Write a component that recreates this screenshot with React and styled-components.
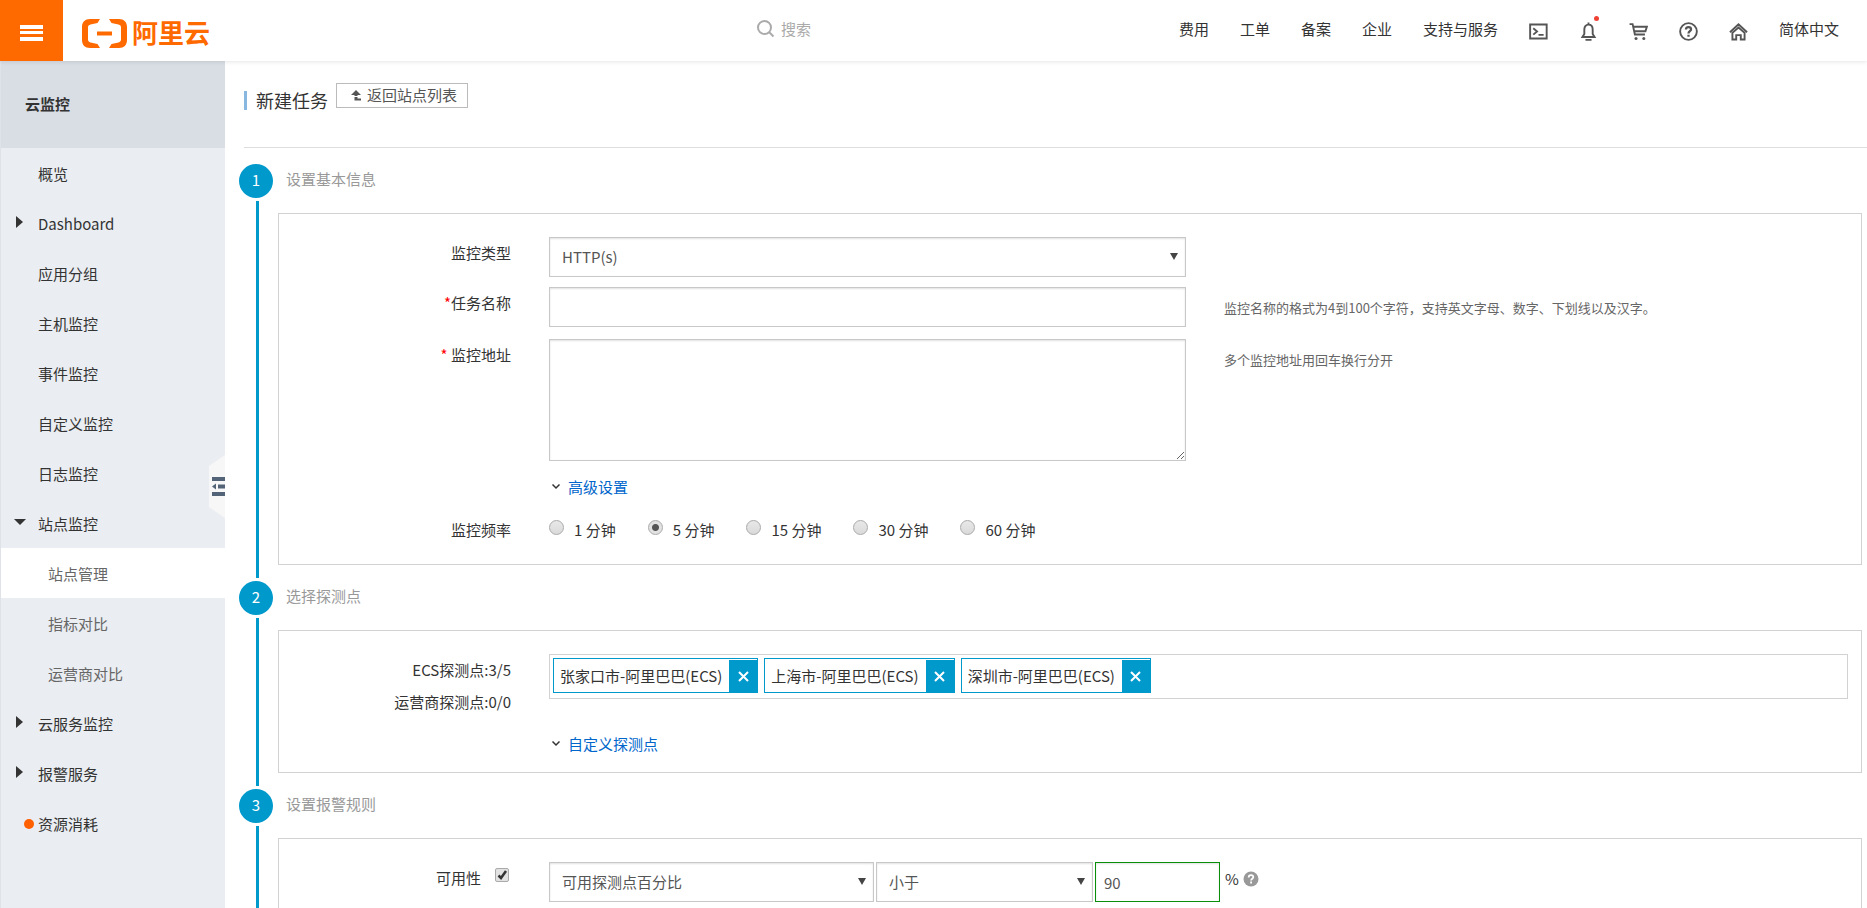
import React, { useState } from "react";
import styled, { createGlobalStyle, css } from "styled-components";

const NAV_LINKS = ["费用", "工单", "备案", "企业", "支持与服务"];

const MENU = [
  { name: "概览" },
  { name: "Dashboard", arrow: "right" },
  { name: "应用分组" },
  { name: "主机监控" },
  { name: "事件监控" },
  { name: "自定义监控" },
  { name: "日志监控" },
  { name: "站点监控", arrow: "down" },
  { name: "站点管理", sub: true, active: true },
  { name: "指标对比", sub: true },
  { name: "运营商对比", sub: true },
  { name: "云服务监控", arrow: "right" },
  { name: "报警服务", arrow: "right" },
  { name: "资源消耗", dot: true },
];

const FREQUENCIES = [1, 5, 15, 30, 60];

const TerminalIcon = () => (
  <NavSvg viewBox="0 0 20 20">
    <path d="M1.2 2.700h17.400v14.600H1.200zM4.500 6.500l4 3.400-4 3.400M10 13.600h5.400" />
  </NavSvg>
);

const BellIcon = () => (
  <NavSvg viewBox="0 0 20 20">
    <path d="M10 2.8c-3 0-4.4 2.200-4.400 5v4.700L3.600 15.800h12.800L14.400 12.500V7.800c0-2.800-1.400-5-4.400-5zM10 2.800V.6M6.800 18.800h6.400" />
  </NavSvg>
);

const CartIcon = () => (
  <NavSvg viewBox="0 0 20 20">
    <path d="M.6 2.200h3.200l2.400 11h10.600M4.500 5h14.300l-1.500 4.800H5.600" />
    <circle cx="7.400" cy="17.400" r="1.600" className="fill" />
    <circle cx="15.600" cy="17.400" r="1.600" className="fill" />
  </NavSvg>
);

const HelpIcon = () => (
  <NavSvg viewBox="0 0 20 20">
    <circle cx="10" cy="10" r="8.800" />
    <path d="M7.300 8c0-1.700 1.100-2.700 2.700-2.700s2.700 1 2.700 2.400c0 2-2.700 2-2.700 4.300M10 13.400v2" strokeWidth="2.400" />
  </NavSvg>
);

const HomeIcon = () => (
  <NavSvg viewBox="0 0 20 20">
    <path d="M1 10.800l9-8.400 9 8.400M3.600 11.400v7h4v-4.600h4.800v4.600h4v-7L10 5.800z" />
  </NavSvg>
);

const Chevron = () => (
  <ChevronSvg viewBox="0 0 14 14">
    <path d="M3.500 4.500l3.500 3.500 3.500-3.500" fill="none" stroke="#333" strokeWidth="1.500" />
  </ChevronSvg>
);

const Header = () => (
  <TopBar>
    <MenuButton aria-label="menu">
      <svg width="23" height="16" viewBox="0 0 23 16" fill="#fff">
        <path d="M0 0h23v4H0zM0 6h23v3H0zM0 12h23v4H0z" />
      </svg>
    </MenuButton>
    <Logo href="#">
      <svg width="45" height="29" viewBox="0 0 45 29" fill="#ff6a00">
        <path d="M18 0H8C3 0 0 3 0 8v13c0 5 3 8 8 8h10l-2.500-4-7-1.600C6.800 23 6 22 6 20.500v-12C6 7 6.800 6 8.500 5.600l7-1.600z" />
        <path d="M27 0h10c5 0 8 3 8 8v13c0 5-3 8-8 8H27l2.500-4 7-1.600c1.700-.4 2.500-1.400 2.500-2.900v-12c0-1.500-.8-2.500-2.500-2.900l-7-1.600z" />
        <path d="M15 12.500h15v4H15z" />
      </svg>
      <span>阿里云</span>
    </Logo>
    <Search>
      <svg width="18" height="18" viewBox="0 0 18 18" fill="none" stroke="#aaa" strokeWidth="2">
        <circle cx="7.500" cy="7.500" r="6.500" />
        <path d="M12 12l4.500 4.500" />
      </svg>
      <input aria-label="搜索" placeholder="搜索" />
    </Search>
    <Nav>
      {NAV_LINKS.map((name) => (
        <a key={name} href="#">
          {name}
        </a>
      ))}
      <NavButton aria-label="terminal">
        <TerminalIcon />
      </NavButton>
      <NavButton aria-label="notifications">
        <BellIcon />
        <Badge />
      </NavButton>
      <NavButton aria-label="cart">
        <CartIcon />
      </NavButton>
      <NavButton aria-label="help">
        <HelpIcon />
      </NavButton>
      <NavButton aria-label="home">
        <HomeIcon />
      </NavButton>
      <a href="#">简体中文</a>
    </Nav>
  </TopBar>
);

const SideMenu = () => (
  <Sidebar>
    <SidebarTitle>云监控</SidebarTitle>
    {MENU.map(({ name, arrow, dot, sub, active }) => (
      <MenuItem key={name} href="#" $sub={sub} $active={active}>
        <Marker>
          {arrow === "right" && (
            <svg width="7" height="12" viewBox="0 0 7 12">
              <path d="M0 0l7 6-7 6z" fill="#333" />
            </svg>
          )}
          {arrow === "down" && (
            <svg width="12" height="6" viewBox="0 0 12 6">
              <path d="M0 0h12L6 6z" fill="#333" />
            </svg>
          )}
          {dot && <Dot />}
        </Marker>
        {name}
      </MenuItem>
    ))}
    <CollapseButton aria-label="collapse">
      <svg width="13" height="19" viewBox="0 0 13 19" fill="#546478">
        <path d="M0 0h13v4H0zM6 7.500h7v4H6zM0 15h13v4H0zM0 9.500L4 6.500v6z" />
      </svg>
    </CollapseButton>
  </Sidebar>
);

const Step = ({ no, title, children }) => (
  <StepWrapper>
    <Rail>
      <StepNumber>{no}</StepNumber>
      <RailLine />
    </Rail>
    <StepBody>
      <StepTitle>{title}</StepTitle>
      <Panel>{children}</Panel>
    </StepBody>
  </StepWrapper>
);

const App = () => {
  const [frequency, setFrequency] = useState(5);
  const [available, setAvailable] = useState(true);
  const [points, setPoints] = useState(["张家口市", "上海市", "深圳市"]);

  const removePoint = (point) => setPoints(points.filter((p) => p !== point));

  return (
    <>
      <GlobalStyle />
      <Page>
        <Header />
        <Layout>
          <SideMenu />
          <Main>
            <PageHead>
              <PageTitle>新建任务</PageTitle>
              <BackButton>
                <svg width="10" height="11" viewBox="0 0 10 11" fill="#555">
                  <path d="M5 0l5 5H6.500v2H3.500V5H0zM3.500 6v4.500H10V8.500H6.500V6z" />
                </svg>
                返回站点列表
              </BackButton>
            </PageHead>

            <Step no={1} title="设置基本信息">
              <Row>
                <Label htmlFor="type">监控类型</Label>
                <SelectBox>
                  <select id="type" defaultValue="http">
                    <option value="http">HTTP(s)</option>
                  </select>
                </SelectBox>
              </Row>
              <Row>
                <Label htmlFor="name">
                  <em>*</em>任务名称
                </Label>
                <TextInput id="name" />
                <Hint>监控名称的格式为4到100个字符，支持英文字母、数字、下划线以及汉字。</Hint>
              </Row>
              <Row $space="2px">
                <Label htmlFor="address">
                  <em>*</em> 监控地址
                </Label>
                <TextArea id="address" />
                <Hint>多个监控地址用回车换行分开</Hint>
              </Row>
              <ToggleRow>
                <Chevron />
                <a href="#">高级设置</a>
              </ToggleRow>
              <Row $space="7px" role="radiogroup" aria-labelledby="frequency">
                <Label as="span" id="frequency">
                  监控频率
                </Label>
                <RadioList>
                  {FREQUENCIES.map((minutes) => (
                    <RadioLabel key={minutes}>
                      <input
                        type="radio"
                        name="frequency"
                        checked={frequency === minutes}
                        onChange={() => setFrequency(minutes)}
                      />
                      {minutes} 分钟
                    </RadioLabel>
                  ))}
                </RadioList>
              </Row>
            </Step>

            <Step no={2} title="选择探测点">
              <WideRow>
                <Counts>
                  <span>ECS探测点:{points.length}/5</span>
                  <span>运营商探测点:0/0</span>
                </Counts>
                <TagBox>
                  {points.map((point) => (
                    <Tag key={point}>
                      <span>{point}-阿里巴巴(ECS)</span>
                      <button
                        type="button"
                        aria-label={`remove ${point}`}
                        onClick={() => removePoint(point)}
                      >
                        <svg width="11" height="11" viewBox="0 0 11 11">
                          <path d="M1 1l9 9M10 1l-9 9" stroke="#fff" strokeWidth="2" />
                        </svg>
                      </button>
                    </Tag>
                  ))}
                </TagBox>
              </WideRow>
              <ToggleRow>
                <Chevron />
                <a href="#">自定义探测点</a>
              </ToggleRow>
            </Step>

            <Step no={3} title="设置报警规则">
              <WideRow>
                <CheckLabel>
                  可用性
                  <CheckBox>
                    <input
                      type="checkbox"
                      checked={available}
                      onChange={() => setAvailable(!available)}
                    />
                    {available && (
                      <svg viewBox="0 0 14 14">
                        <path d="M3.500 7.500l2.500 2.500 5-7" fill="none" stroke="#333" strokeWidth="2.500" />
                      </svg>
                    )}
                  </CheckBox>
                </CheckLabel>
                <RuleFields>
                  <SelectBox $width="325px">
                    <select aria-label="指标" defaultValue="percent">
                      <option value="percent">可用探测点百分比</option>
                    </select>
                  </SelectBox>
                  <SelectBox $width="217px">
                    <select aria-label="比较" defaultValue="lt">
                      <option value="lt">小于</option>
                    </select>
                  </SelectBox>
                  <ValueInput aria-label="阈值" defaultValue="90" />
                  <Unit>
                    %
                    <svg width="16" height="16" viewBox="0 0 16 16">
                      <circle cx="8" cy="8" r="7.500" fill="#999" />
                      <path
                        d="M5.700 6.400c0-1.500 1-2.300 2.300-2.300s2.300.8 2.300 2c0 1.600-2.200 1.600-2.200 3.300M8.100 10.600v2"
                        fill="none"
                        stroke="#fff"
                        strokeWidth="1.800"
                      />
                    </svg>
                  </Unit>
                </RuleFields>
              </WideRow>
            </Step>
          </Main>
        </Layout>
      </Page>
    </>
  );
};

const GlobalStyle = createGlobalStyle`
  * {
    box-sizing: border-box;
  }
  body {
    margin: 0;
    color: #333;
    background: #fff;
  }
  body, button, input, select, textarea {
    font-family: "Noto Sans CJK SC", sans-serif;
    font-size: 15px;
    line-height: 20px;
  }
  a {
    color: inherit;
    text-decoration: none;
  }
  svg {
    flex: none;
  }
`;

const Page = styled.div`
  display: flex;
  flex-direction: column;
  height: 100vh;
`;

const TopBar = styled.header`
  z-index: 1;
  display: flex;
  align-items: center;
  flex: none;
  height: 61px;
  padding-right: 28px;
  background: #fff;
  box-shadow: 0 1px 4px rgba(0, 0, 0, 0.1);
`;

const MenuButton = styled.button`
  display: flex;
  align-items: center;
  justify-content: center;
  width: 63px;
  height: 100%;
  padding: 4px 0 0;
  border: 0;
  background: #ff6a00;
`;

const Logo = styled.a`
  display: flex;
  align-items: center;
  gap: 5px;
  margin-left: 19px;
  padding-top: 5px;
  color: #ff6a00;
  font-size: 26px;
  font-weight: bold;

  span {
    padding-bottom: 2px;
  }
`;

const Search = styled.label`
  display: flex;
  align-items: center;
  gap: 6px;
  width: 392px;
  margin-left: auto;
  padding-bottom: 4px;

  input {
    flex: 1;
    min-width: 0;
    padding: 0;
    border: 0;
    outline: 0;
  }
  input::placeholder {
    color: #aaa;
  }
`;

const Nav = styled.nav`
  display: flex;
  align-items: center;
  gap: 31px;
  margin-left: 30px;
  white-space: nowrap;

  a {
    padding-bottom: 4px;
  }
`;

const NavButton = styled.button`
  position: relative;
  display: flex;
  padding: 2px 0 0;
  border: 0;
  background: none;
`;

const NavSvg = styled.svg`
  width: 19px;
  height: 19px;
  fill: none;
  stroke: #555;
  stroke-width: 2;

  .fill {
    fill: #555;
    stroke: none;
  }
`;

const Badge = styled.span`
  position: absolute;
  top: -4px;
  right: -1px;
  width: 5px;
  height: 5px;
  border-radius: 50%;
  background: #f04134;
`;

const Layout = styled.div`
  display: flex;
  flex: 1;
  min-height: 0;
`;

const Sidebar = styled.aside`
  position: relative;
  flex: none;
  width: 225px;
  border-left: 1px solid #dfe3e7;
  background: #eaedf1;
`;

const SidebarTitle = styled.div`
  display: flex;
  align-items: center;
  height: 87px;
  padding: 0 0 2px 24px;
  background: #d9dde4;
  font-weight: bold;
`;

const MenuItem = styled.a`
  display: flex;
  align-items: center;
  height: 50px;
  padding-top: 1px;

  ${({ $sub }) =>
    $sub &&
    css`
      padding-left: 10px;
      color: #666;
    `}
  ${({ $active }) =>
    $active &&
    css`
      background: #fff;
    `}
`;

const Marker = styled.span`
  display: flex;
  align-items: center;
  justify-content: center;
  width: 37px;
  padding-bottom: 3px;
`;

const Dot = styled.i`
  width: 10px;
  height: 10px;
  margin: 3px 0 0 18px;
  border-radius: 50%;
  background: #ff6000;
`;

const CollapseButton = styled.button`
  position: absolute;
  top: 394px;
  right: 0;
  display: flex;
  align-items: center;
  justify-content: flex-end;
  width: 16px;
  height: 63px;
  padding: 0;
  border: 0;
  background: #f7f7f7;
  clip-path: polygon(100% 0, 0 11px, 0 52px, 100% 100%);
`;

const Main = styled.main`
  flex: 1;
  min-width: 0;
  overflow-y: auto;
  scrollbar-width: none;
`;

const PageHead = styled.div`
  display: flex;
  align-items: flex-start;
  gap: 8px;
  height: 87px;
  margin: 0 0 16px 19px;
  padding-top: 22px;
  border-bottom: 1px solid #ddd;
`;

const PageTitle = styled.h1`
  margin: 8px 0 0;
  padding-left: 9px;
  border-left: 3px solid #88b7e0;
  font-size: 18px;
  font-weight: normal;
  line-height: 19px;
`;

const BackButton = styled.button`
  display: flex;
  align-items: center;
  gap: 6px;
  height: 25px;
  padding: 0 10px 1px 14px;
  border: 1px solid #bbb;
  background: #fff;
  color: #555;
`;

const StepWrapper = styled.section`
  display: flex;
  padding: 0 5px 0 14px;
`;

const Rail = styled.div`
  display: flex;
  flex-direction: column;
  align-items: center;
  gap: 3px;
  width: 34px;
`;

const StepNumber = styled.span`
  width: 34px;
  height: 34px;
  border-radius: 50%;
  background: #0099cc;
  color: #fff;
  line-height: 32px;
  text-align: center;
`;

const RailLine = styled.i`
  flex: 1;
  width: 3px;
  margin: 0 0 3px 3px;
  background: #0099cc;
`;

const StepBody = styled.div`
  flex: 1;
  min-width: 0;
  padding: 5px 0 16px 5px;
`;

const StepTitle = styled.h2`
  margin: 0 0 24px 8px;
  color: #999;
  font-size: 15px;
  font-weight: normal;
  line-height: 20px;
`;

const Panel = styled.form`
  display: flex;
  flex-direction: column;
  gap: 10px;
  padding: 23px 13px 18px 0;
  border: 1px solid #d2d2d2;
`;

const Row = styled.div`
  display: grid;
  grid-template-columns: 232px minmax(0, 637px) minmax(0, 1fr);
  column-gap: 38px;
  margin-top: ${({ $space }) => $space || 0};
`;

const WideRow = styled(Row)`
  grid-template-columns: 232px minmax(0, 1fr);
`;

const Label = styled.label`
  padding-top: 6px;
  text-align: right;

  em {
    color: #f00;
    font-style: normal;
  }
`;

const Hint = styled.span`
  padding-top: 11px;
  color: #666;
  font-size: 13px;
`;

const field = css`
  width: 100%;
  border: 1px solid #c8c8c8;
  border-radius: 0;
  outline: 0;
  background: #fff;
  box-shadow: inset 0 1px 2px rgba(0, 0, 0, 0.12);
  color: #555;
`;

const TextInput = styled.input`
  ${field}
  height: 40px;
  padding: 0 12px;
`;

const TextArea = styled.textarea`
  ${field}
  display: block;
  height: 122px;
  padding: 8px 12px;
`;

const SelectBox = styled.div`
  position: relative;
  width: ${({ $width }) => $width || "100%"};

  select {
    ${field}
    appearance: none;
    display: block;
    height: 40px;
    padding: 0 12px;
  }
  &::after {
    content: "";
    position: absolute;
    top: 16px;
    right: 8px;
    border: 4px solid transparent;
    border-top: 7px solid #444;
    border-bottom: 0;
  }
`;

const ToggleRow = styled.div`
  display: flex;
  align-items: center;
  gap: 5px;
  margin: 6px 0 0 270px;

  a {
    color: #06c;
  }
`;

const ChevronSvg = styled.svg`
  width: 14px;
  height: 14px;
`;

const RadioList = styled.div`
  display: flex;
  gap: 32px;
  padding: 6px 0;
  white-space: nowrap;
`;

const RadioLabel = styled.label`
  display: flex;
  gap: 10px;

  input {
    appearance: none;
    width: 15px;
    height: 15px;
    margin: 0;
    border: 1px solid #aaa;
    border-radius: 50%;
    background: linear-gradient(#e8e8e8, #dadada);
  }
  input:checked {
    background: radial-gradient(circle, #555 3px, #e2e2e2 4px);
  }
`;

const Counts = styled.div`
  display: flex;
  flex-direction: column;
  gap: 12px;
  padding: 6px 0;
  text-align: right;
`;

const TagBox = styled.div`
  display: flex;
  align-items: flex-start;
  gap: 6px;
  height: 45px;
  padding: 3px;
  border: 1px solid #d2d2d2;
`;

const Tag = styled.span`
  display: flex;
  align-items: center;
  height: 35px;
  padding-top: 1px;
  border: 1px solid #0099cc;
  white-space: nowrap;

  span {
    padding: 0 7px 0 6px;
  }
  button {
    display: flex;
    align-items: center;
    justify-content: center;
    width: 28px;
    height: 100%;
    padding: 0;
    border: 0;
    background: #0099cc;
  }
`;

const CheckLabel = styled.label`
  display: flex;
  justify-content: flex-end;
  gap: 14px;
  padding: 6px 2px 0 0;
`;

const CheckBox = styled.span`
  display: grid;
  width: 14px;
  height: 14px;

  input,
  svg {
    grid-area: 1 / 1;
    width: 14px;
    height: 14px;
  }
  input {
    appearance: none;
    margin: 0;
    border: 1px solid #aaa;
    border-radius: 2px;
    background: #e2e2e2;
  }
  svg {
    z-index: 1;
    pointer-events: none;
  }
`;

const RuleFields = styled.div`
  display: flex;
  gap: 2px;
`;

const ValueInput = styled(TextInput)`
  width: 125px;
  padding: 0 8px;
  border-color: #0a8f0a;
`;

const Unit = styled.span`
  display: flex;
  align-items: center;
  gap: 4px;
  height: 34px;
  padding-left: 3px;
`;

export default App;
